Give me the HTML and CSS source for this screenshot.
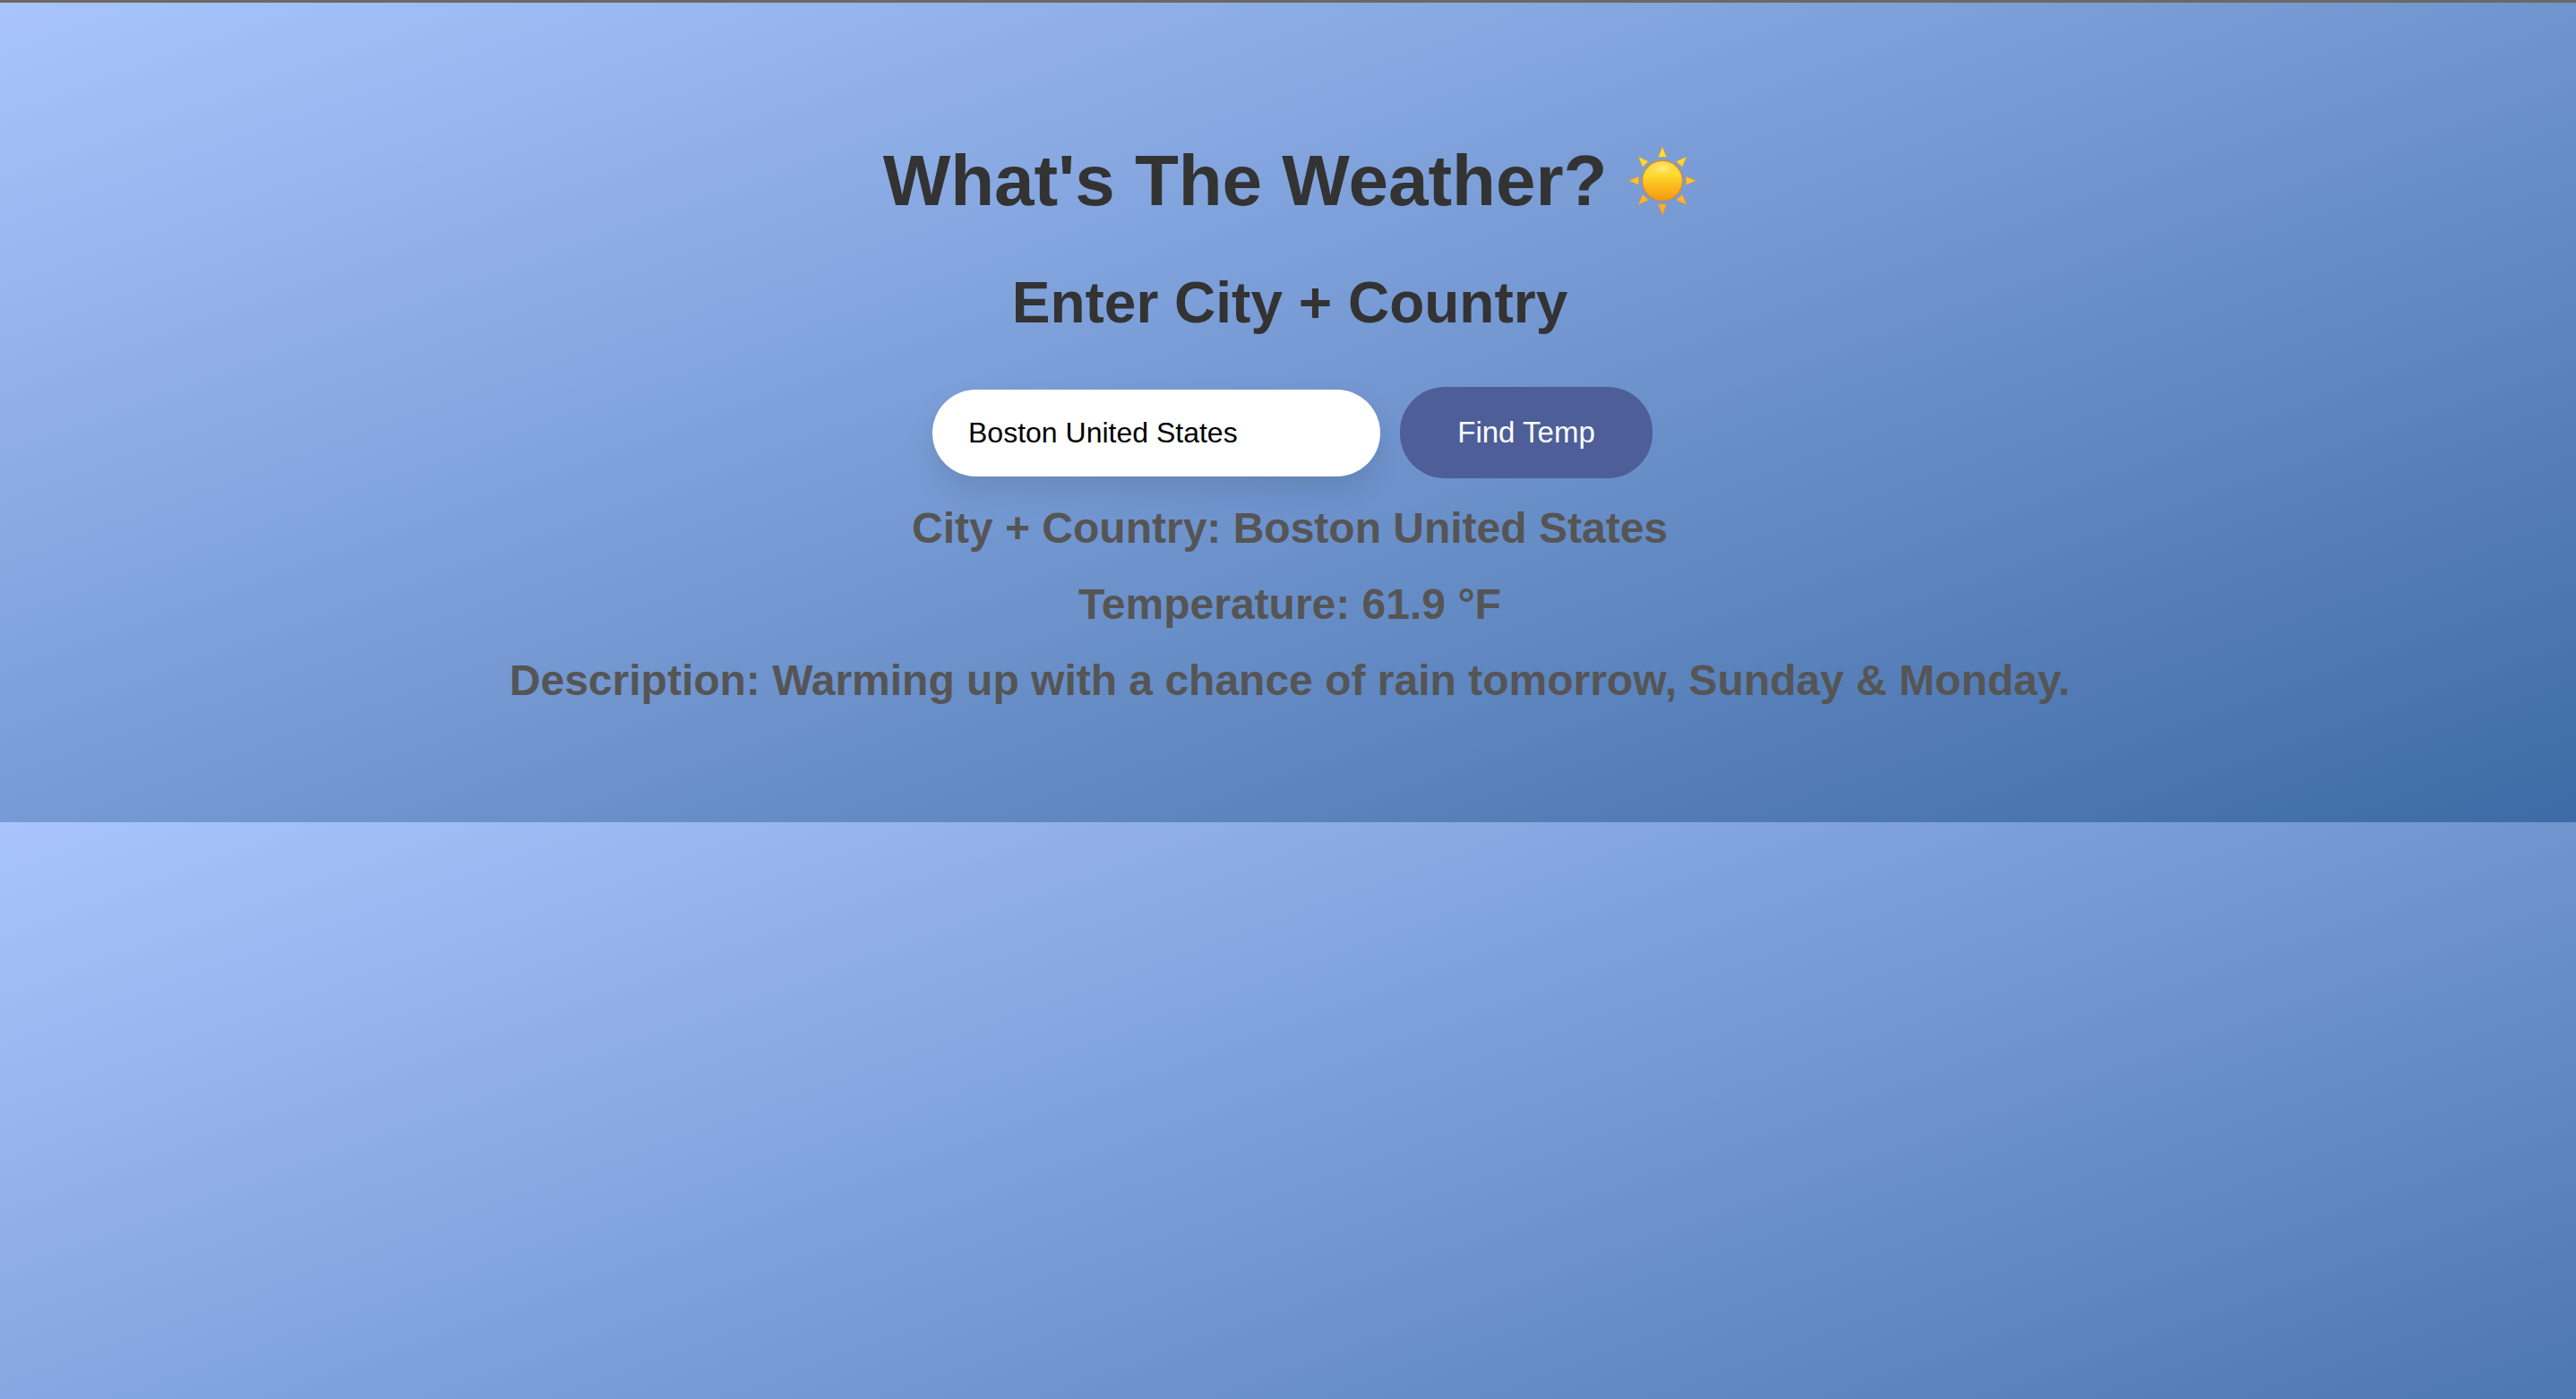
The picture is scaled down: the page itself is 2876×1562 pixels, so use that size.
FILE: index.html
```html
<!DOCTYPE html>
<html lang="en">
<head>
<meta charset="utf-8">
<meta name="viewport" content="width=device-width, initial-scale=1">
<title>What's The Weather?</title>
<link rel="stylesheet" href="styles.css">
</head>
<body>
<main class="weather">
  <h1 class="title">What's The Weather?
    <svg class="sun" viewBox="0 0 76 78" role="img" aria-label="Sun">
      <defs>
        <linearGradient id="disc" x1="0" y1="0" x2="0" y2="1">
          <stop offset="0" stop-color="#fcd848"/>
          <stop offset=".35" stop-color="#fedb30"/>
          <stop offset=".65" stop-color="#fbb81b"/>
          <stop offset="1" stop-color="#f29a12"/>
        </linearGradient>
        <radialGradient id="shine">
          <stop offset="0" stop-color="#fff3a0" stop-opacity=".8"/>
          <stop offset="1" stop-color="#ffe560" stop-opacity="0"/>
        </radialGradient>
        <linearGradient id="rays" gradientUnits="userSpaceOnUse" x1="0" y1="0" x2="0" y2="78">
          <stop offset="0" stop-color="#fbea3a"/>
          <stop offset=".5" stop-color="#fcc52c"/>
          <stop offset="1" stop-color="#faa92a"/>
        </linearGradient>
      </defs>
      <g fill="url(#rays)" stroke="#df9440" stroke-width=".7" stroke-linejoin="round">
        <path d="M38 .8 42.8 12.6H33.2Z"/>
        <path d="M38 77.2 42.8 65H33.2Z"/>
        <path d="M.4 38.8 11.6 34V43.6Z"/>
        <path d="M75.6 38.8 64.4 34V43.6Z"/>
        <path d="M11.2 12 22.6 17.2 15.8 23.6Z"/>
        <path d="M65 12 53.4 17.2 60.2 23.6Z"/>
        <path d="M11.2 65.6 15.8 54 22.6 60.4Z"/>
        <path d="M65 65.6 60.2 54 53.4 60.4Z"/>
      </g>
      <circle cx="38" cy="38.8" r="22.4" fill="url(#disc)" stroke="#e58a1f" stroke-width="1.2"/>
      <ellipse cx="38" cy="25" rx="15" ry="8" fill="url(#shine)"/>
    </svg>
  </h1>
  <form class="search">
    <label class="prompt" for="place">Enter City + Country</label>
    <div class="controls">
      <input class="field" id="place" type="text" value="Boston United States">
      <button class="find" type="button">Find Temp</button>
    </div>
  </form>
  <section class="results">
    <h3 class="result">City + Country: Boston United States</h3>
    <h3 class="result">Temperature: 61.9 °F</h3>
    <h3 class="result">Description: Warming up with a chance of rain tomorrow, Sunday &amp; Monday.</h3>
  </section>
</main>
</body>
</html>
```
FILE: styles.css
```css
:root {
  --sky: linear-gradient(160deg, #a9c4fd, #3e6ba5);
}

* {
  box-sizing: border-box;
}

html {
  min-height: 100%;
  background: #a9c4fd;
}

body {
  display: flow-root;
  min-height: 100vh;
  margin: 0;
  border-top: 3px solid #6b6963;
  font-family: "Liberation Sans", Arial, sans-serif;
  text-align: center;
  background-image: var(--sky);
  background-size: 100% 915px;
  background-origin: padding-box;
}

.weather {
  padding: 151px 40px 128px 44px;
}

.title {
  display: flex;
  justify-content: center;
  align-items: center;
  gap: 24px;
  margin: 0;
  font-size: 80px;
  line-height: 96px;
  color: #333;
}

.sun {
  width: 76px;
  height: 78px;
}

.prompt {
  display: block;
  margin-top: 48px;
  font-size: 64px;
  font-weight: bold;
  line-height: 80px;
  color: #333;
}

.controls {
  display: flex;
  justify-content: center;
  align-items: center;
  gap: 22px;
  margin-top: 54px;
  padding-left: 6px;
}

.field {
  width: 500px;
  height: 97px;
  padding: 0 40px;
  border: 0;
  border-radius: 50px;
  font: 32px "Liberation Sans", Arial, sans-serif;
  color: #000;
  background: #fff;
  box-shadow: 0 16px 32px rgba(0, 0, 0, 0.1);
}

.find {
  width: 282px;
  height: 102px;
  padding: 0;
  border: 0;
  border-radius: 50px;
  font: 33px "Liberation Sans", Arial, sans-serif;
  color: #fff;
  background: #4d5e98;
}

.results {
  padding-top: 13px;
}

.result {
  margin: 0;
  font-size: 48px;
  line-height: 85px;
  color: #555;
}
```
